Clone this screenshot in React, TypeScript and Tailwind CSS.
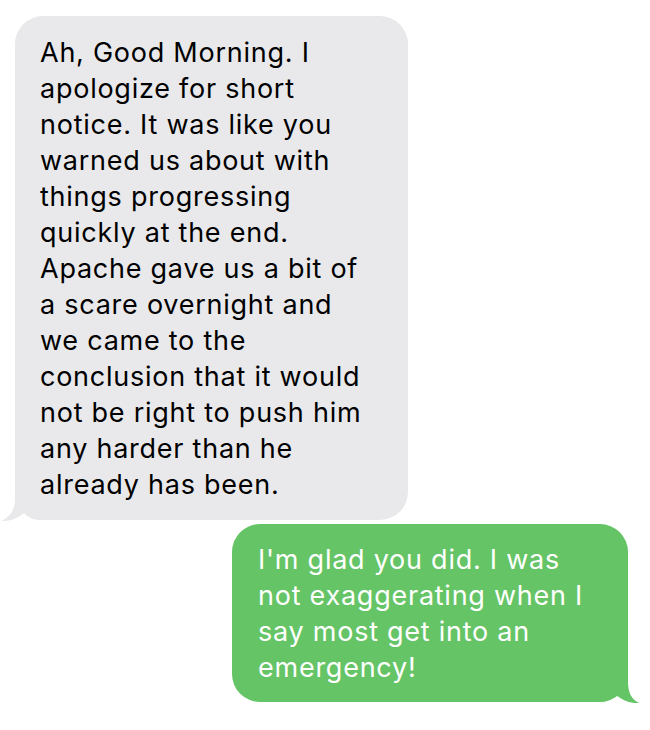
import React from "react";

const greyLines = [
  "Ah, Good Morning. I",
  "apologize for short",
  "notice. It was like you",
  "warned us about with",
  "things progressing",
  "quickly at the end.",
  "Apache gave us a bit of",
  "a scare overnight and",
  "we came to the",
  "conclusion that it would",
  "not be right to push him",
  "any harder than he",
  "already has been.",
];

const greenLines = [
  "I'm glad you did. I was",
  "not exaggerating when I",
  "say most get into an",
  "emergency!",
];

export default function App() {
  return (
    <div
      className="w-[650px] h-[730px] bg-white flex flex-col"
      style={{ fontFamily: "Inter, 'Noto Sans', sans-serif" }}
    >
      <div className="relative ml-[15px] mt-[16px] w-[393px] rounded-[28px] bg-[#e9e9eb] pl-[25px] pr-[10px] pt-[19px] pb-[17px] text-[27px] leading-[36px] tracking-[0.75px] text-black">
        {greyLines.map((l, i) => (
          <div key={i} className="whitespace-nowrap">{l}</div>
        ))}
        <svg
          className="absolute left-[-15px] bottom-[-1px]"
          width="40"
          height="32"
          viewBox="0 0 40 32"
        >
          <path
            d="M15 0 L15 10 C15 21 10 28 1 32 C10 32.5 18 29 24 24 C28 28 32 31 40 31 L40 0 Z"
            fill="#e9e9eb"
          />
        </svg>
      </div>
      <div className="relative self-end mr-[22px] mt-[4px] w-[396px] rounded-[28px] bg-[#65c466] pl-[26px] pr-[10px] pt-[18px] pb-[16px] text-[27px] leading-[36px] tracking-[0.75px] text-white">
        {greenLines.map((l, i) => (
          <div key={i} className="whitespace-nowrap">{l}</div>
        ))}
        <svg
          className="absolute right-[-12px] bottom-[-1px]"
          width="40"
          height="32"
          viewBox="0 0 40 32"
        >
          <path
            d="M28 0 L28 10 C28 21 31 28 39 32 C30 32.5 22 29 16 24 C12 28 8 31 0 31 L0 0 Z"
            fill="#65c466"
          />
        </svg>
      </div>
    </div>
  );
}
